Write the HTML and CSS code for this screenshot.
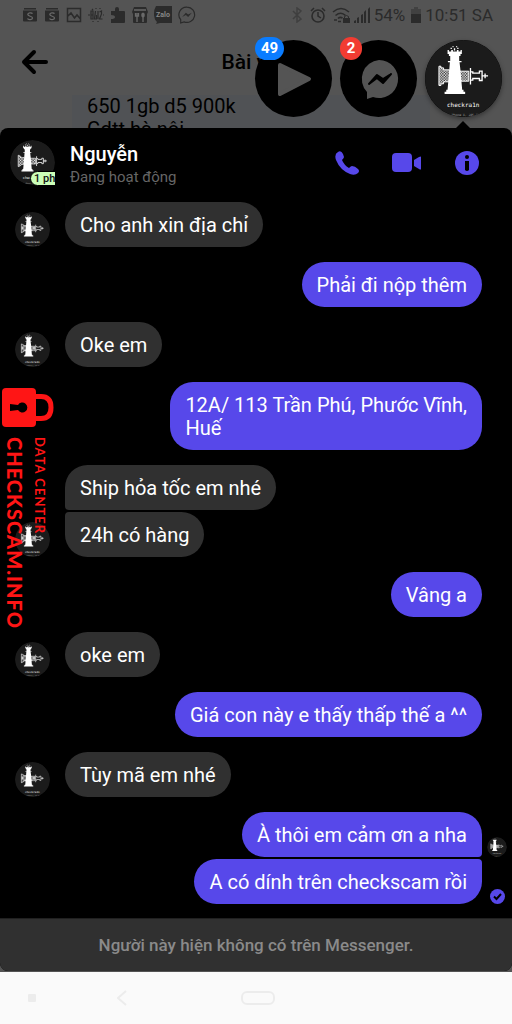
FILE: index.html
```html
<!DOCTYPE html>
<html lang="vi">
<head>
<meta charset="utf-8">
<meta name="viewport" content="width=device-width, initial-scale=1">
<title>Messenger</title>
<link rel="stylesheet" href="styles.css">
</head>
<body>
<svg class="defs" aria-hidden="true">
  <defs>
    <pattern id="mesh" width="8" height="8" patternUnits="userSpaceOnUse">
      <rect width="8" height="8" fill="#fff"/><rect width="4" height="4" fill="#1b1b1b"/><rect x="4" y="4" width="4" height="4" fill="#1b1b1b"/>
    </pattern>
    <clipPath id="disc"><circle cx="160" cy="144" r="116"/></clipPath>
    <symbol id="rook" viewBox="44 28 232 232">
      <g clip-path="url(#disc)">
        <circle cx="160" cy="144" r="116" fill="#1b1b1b"/>
        <path fill="url(#mesh)" stroke="#fff" stroke-width="3" d="M86 107h6v5h8v6h18v36h-18v6h-8v5h-6z"/>
        <path fill="url(#mesh)" stroke="#fff" stroke-width="3" d="M148 122h28v30h-28z"/>
        <path fill="none" stroke="#fff" stroke-width="4" d="M181 112v12h7v4h20v-6h8v28h-8v-6h-20v5h-7v13M181 124v25M216 136h18M225 129v14"/>
        <path fill="#fff" d="M112 58h4v5h7v-5h5v5h12v-5h5v5h6v-5h4v12h-4v6h-4v15h7v4h-6l3 25 5 58h4v6h5v7h-62v-7h5v-6h4l5-58 2-25h-6v-4h7V76h-4v-6h-4z"/>
        <path fill="#fff" d="M121 51h4v4h-4zM131 53h4v7h-4zM141 51h4v4h-4zM127 46h3v4h-3zM138 46h3v4h-3z"/>
        <text x="159" y="231" text-anchor="middle" class="rook-name">checkra1n</text>
        <text x="164" y="256" text-anchor="middle" class="rook-note">iPhone X, iOS 13</text>
      </g>
    </symbol>
    <symbol id="bolt-bubble" viewBox="0 0 24 24">
      <path fill="none" stroke="currentColor" stroke-width="1.6" d="M12 1.5a10.2 10.2 0 1 1-4 19.6L3.600 22.600v-4.400A10.2 10.2 0 0 1 12 1.500z"/>
      <path fill="currentColor" d="M5.500 14.500l5-5.500 3 2.400 5-2.400-5 5.600-3-2.500z"/>
    </symbol>
    <symbol id="card-s" viewBox="0 0 16 16">
      <path fill="currentColor" d="M2 1h12v1.500H2zM1 3.500h14v10q0 1-1 1H2q-1 0-1-1z"/>
      <path fill="none" stroke="#6a6a6a" stroke-width="1.300" d="M10.500 6.700C9.800 5.500 5.800 5.500 5.800 7.500S10.500 9 10.500 11s-4.300 2.100-5 .6"/>
    </symbol>
  </defs>
</svg>

<div class="screen">
  <section class="backdrop">
    <div class="statusbar">
      <div class="notices">
        <svg viewBox="0 0 16 16"><use href="#card-s"/></svg>
        <svg viewBox="0 0 16 16"><use href="#card-s"/></svg>
        <svg viewBox="0 0 16 16"><path fill="none" stroke="currentColor" stroke-width="1.500" d="M1.500 1.500h13v13h-13zM2 9l3-3 3.500 5L11 8l3.500 4"/></svg>
        <svg viewBox="0 0 16 16"><path fill="none" stroke="currentColor" stroke-width="1.200" d="M0 8h2M3 4v8h2V8H3V4h2v4M7.500 4L6.500 12h2V8M10 4v8M11.500 5l2-1v3l-2 5h3M15 8h1M4 2l1 1M8 1v1M12 1v1M5 14v1M10 14v1"/></svg>
        <svg viewBox="0 0 16 16"><path fill="currentColor" d="M1 4h4V2q0-2 2-2t2 2v2h5q1 0 1 1v10q0 1-1 1H1v-4q4 0 4-2T1 8z"/></svg>
        <svg viewBox="0 0 16 16"><path fill="currentColor" d="M2 0h12l2 5-1 2v8q0 1-1 1H2q-1 0-1-1V7L0 5z"/><path stroke="#6a6a6a" stroke-width="1.300" fill="none" d="M2 3h12M5 6v9M3.500 6v3h3V6M11 10v5"/><ellipse cx="11" cy="8" rx="1.800" ry="2.500" fill="#6a6a6a"/></svg>
        <svg class="zalo" viewBox="0 0 18 18"><path fill="currentColor" d="M2 0h16v17H6l-4 1 1-2Q0 13 0 8q0-5 2-8z"/><text x="9" y="11" text-anchor="middle">Zalo</text></svg>
        <svg class="msgr"><use href="#bolt-bubble"/></svg>
      </div>
      <div class="system">
        <svg class="bt" viewBox="0 0 10 16"><path fill="none" stroke="currentColor" stroke-width="1.500" d="M1 4l8 8-4 3V1l4 3-8 8"/></svg>
        <svg viewBox="0 0 16 16"><circle cx="8" cy="9" r="6" fill="none" stroke="currentColor" stroke-width="1.600"/><path fill="none" stroke="currentColor" stroke-width="1.500" d="M1 4l3-3M15 4l-3-3M8 5v4l3 2"/></svg>
        <svg class="wifi" viewBox="0 0 18 16"><path fill="none" stroke="currentColor" stroke-width="1.600" d="M1 5q8-7 16 0M3.500 8.500q5.500-4.500 10 0M6 11.500q2-2 4.500-.5M2 13h3M6 14.500h3"/><path fill="currentColor" d="M11 11h7v5h-7z"/><path fill="none" stroke="currentColor" d="M12.500 11V9.500q2-2 4 0V11"/></svg>
        <svg viewBox="0 0 16 16"><path fill="currentColor" d="M0 14l2-1v3H0zM3 11l2-1v6H3zM7 8l2-1v9H7zM10 5l2-2v13h-2zM14 2l2-2v16h-2z"/></svg>
        <span>54%</span>
        <svg class="battery" viewBox="0 0 10 16"><path opacity=".45" fill="currentColor" d="M3 0h4v2h3v6H0V2h3z"/><path fill="currentColor" d="M0 7h10v9H0z"/></svg>
        <span>10:51 SA</span>
      </div>
    </div>
    <header class="post-header">
      <button class="back" aria-label="Quay lại"><svg viewBox="0 0 28 26"><path fill="none" stroke="#000" stroke-width="4" stroke-linecap="round" stroke-linejoin="round" d="M13 3L3 13l10 10M3 13h22"/></svg></button>
      <h1>Bài viết</h1>
    </header>
    <div class="post">650 1gb d5 900k<br>Gdtt hà nội</div>
    <nav class="heads">
      <button class="head" aria-label="Video, 49 thông báo"><svg viewBox="0 0 77 77"><path fill="#545454" stroke="#545454" stroke-width="4" stroke-linejoin="round" d="M25 25l29 14-29 15z"/></svg><span class="count blue">49</span></button>
      <button class="head" aria-label="Tin nhắn, 2 thông báo"><svg viewBox="0 0 77 77"><path fill="#545454" d="M39 20a19 19 0 1 1-6 37l-6 2v-7A19 19 0 0 1 39 20z"/><path fill="#000" stroke="#000" stroke-width="2" stroke-linejoin="round" d="M29 44l8-9 6 4 8-5-8 9-6-5z"/></svg><span class="count red">2</span></button>
      <button class="head current" aria-label="Nguyễn"><svg><use href="#rook"/></svg></button>
    </nav>
  </section>

  <main class="chat">
    <header class="chat-header">
      <div class="portrait"><svg><use href="#rook"/></svg><span class="ago">1 phút</span></div>
      <div class="who"><h2>Nguyễn</h2><p>Đang hoạt động</p></div>
      <div class="actions">
        <button aria-label="Gọi thoại"><svg viewBox="0 0 24 24"><path fill="currentColor" d="M3 1q3-2 5 2l1 3q0 1-2 3 2 5 7 8 2-2 3-2 3 0 6 3 2 2 0 4-3 3-8 1Q5 19 1 9-1 3 3 1z"/></svg></button>
        <button aria-label="Gọi video"><svg class="video" viewBox="0 0 30 20"><rect width="20" height="19" rx="4" fill="currentColor"/><path fill="currentColor" d="M22 7l5-3q2-1 2 0v12q0 1-2 0l-5-3z"/></svg></button>
        <button aria-label="Thông tin"><svg viewBox="0 0 24 24"><circle cx="12" cy="12" r="12" fill="currentColor"/><circle cx="12" cy="6" r="2" fill="#000"/><path fill="#000" d="M10 10h4v9q-2 2-4 0z"/></svg></button>
      </div>
    </header>

    <div class="messages">
      <div class="row"><svg class="avatar"><use href="#rook"/></svg><p class="bubble">Cho anh xin địa chỉ</p></div>
      <div class="row mine"><p class="bubble">Phải đi nộp thêm</p><span class="receipt"></span></div>
      <div class="row"><svg class="avatar"><use href="#rook"/></svg><p class="bubble">Oke em</p></div>
      <div class="row mine"><p class="bubble">12A/ 113 Trần Phú, Phước Vĩnh,<br>Huế</p><span class="receipt"></span></div>
      <div class="group">
        <div class="row"><span class="avatar"></span><p class="bubble first">Ship hỏa tốc em nhé</p></div>
        <div class="row"><svg class="avatar"><use href="#rook"/></svg><p class="bubble last">24h có hàng</p></div>
      </div>
      <div class="row mine"><p class="bubble">Vâng a</p><span class="receipt"></span></div>
      <div class="row"><svg class="avatar"><use href="#rook"/></svg><p class="bubble">oke em</p></div>
      <div class="row mine"><p class="bubble">Giá con này e thấy thấp thế a ^^</p><span class="receipt"></span></div>
      <div class="row"><svg class="avatar"><use href="#rook"/></svg><p class="bubble">Tùy mã em nhé</p></div>
      <div class="group">
        <div class="row mine"><p class="bubble first">À thôi em cảm ơn a nha</p><span class="receipt"><svg class="seen"><use href="#rook"/></svg></span></div>
        <div class="row mine"><p class="bubble last">A có dính trên checkscam rồi</p><span class="receipt"><svg class="sent" viewBox="0 0 15 15"><circle cx="7.500" cy="7.500" r="7.500" fill="#5748ea"/><path fill="none" stroke="#000" stroke-width="2" d="M4 7.500l2.500 2.500L11 5"/></svg></span></div>
      </div>
    </div>

    <footer class="unavailable">Người này hiện không có trên Messenger.</footer>

    <aside class="watermark">
      <svg viewBox="0 0 53 40"><path fill="none" stroke="#ff1515" stroke-width="5" d="M32 8.500h7q10 0 10 11t-10 11h-7"/><rect width="34" height="39" rx="4" fill="#ff1515"/><path fill="#000" d="M8 16l8 1a5 5 0 1 1 0 5l-8 1z"/></svg>
      <div class="lines"><strong>CHECKSCAM.INFO</strong><span>DATA CENTER</span></div>
    </aside>
  </main>

  <nav class="softkeys">
    <button aria-label="Ẩn thanh"><svg viewBox="0 0 8 8"><rect width="8" height="8" rx="1" fill="#ececec"/></svg></button>
    <button aria-label="Quay lại"><svg class="prev" viewBox="0 0 10 16"><path fill="none" stroke="#ececec" stroke-width="2" d="M9 1L1 8l8 7"/></svg></button>
    <button aria-label="Màn hình chính"><svg class="home" viewBox="0 0 34 14"><rect x="1" y="1" width="32" height="12" rx="5" fill="none" stroke="#ececec" stroke-width="2"/></svg></button>
  </nav>
</div>
</body>
</html>
```
FILE: styles.css
```css
* { box-sizing: border-box; }
body { margin: 0; background: #545454; font-family: Roboto, "Noto Sans", sans-serif; }
h1, h2, p { margin: 0; }
button { padding: 0; border: 0; background: none; color: inherit; font: inherit; display: flex; align-items: center; justify-content: center; }
svg { display: block; flex: none; }
.defs { position: absolute; width: 0; height: 0; }
.rook-name { font: 18px "DejaVu Sans Mono", monospace; fill: #fff; }
.rook-note { font: 9px "DejaVu Sans Mono", monospace; fill: #aaa; }

.screen { min-height: 100vh; display: flex; flex-direction: column; }

.backdrop { position: relative; height: 128px; }
.statusbar { height: 30px; padding: 0 19px 0 22px; display: flex; align-items: center; justify-content: space-between; color: #2b2b2b; font-size: 17px; line-height: 20px; }
.notices { display: flex; align-items: center; gap: 6px; }
.notices svg, .system svg { width: 16px; height: 16px; }
.notices .zalo, .notices .msgr { width: 18px; height: 18px; }
.zalo text { font: bold 7px Roboto, sans-serif; fill: #888; }
.system { display: flex; align-items: center; gap: 4px; }
.system .bt { width: 10px; opacity: .5; margin-right: 4px; }
.system .wifi { width: 18px; margin-left: 2px; }
.system .battery { width: 10px; margin-left: 2px; }
.post-header { height: 65px; display: grid; grid-template-columns: 1fr auto 1fr; align-items: center; padding: 0 21px 2px 21px; }
.back { width: 28px; height: 28px; }
.back svg { width: 28px; height: 26px; }
.post-header h1 { font-size: 21px; font-weight: 500; line-height: 24px; }
.post { height: 33px; margin: 0 82px 0 72px; padding-left: 15px; overflow: hidden; background: #505255; color: #000; font-size: 20px; line-height: 23px; }
.heads { position: absolute; top: 40px; right: 10px; display: flex; gap: 8px; }
.head { position: relative; width: 77px; height: 77px; border-radius: 50%; background: #000; }
.head svg { width: 77px; height: 77px; }
.head.current { box-shadow: 0 2px 5px #0006; }
.head.current::after { content: ""; position: absolute; top: 81px; left: 30px; border: 8px solid transparent; border-top: 0; border-bottom-color: #000; }
.count { position: absolute; top: -3px; left: 0; min-width: 22px; height: 23px; padding: 0 6px; border-radius: 12px; color: #fff; font-size: 15px; font-weight: 700; line-height: 23px; }
.blue { background: #0a7cff; }
.red { background: #f23c32; }

.chat { position: relative; flex: 1; display: flex; flex-direction: column; margin-bottom: 1px; border-radius: 8px; overflow: hidden; background: #000; color: #fff; }
.chat-header { height: 74px; padding: 12px 32px 16px 10px; display: flex; align-items: flex-start; gap: 15px; }
.portrait { position: relative; width: 45px; height: 46px; overflow: hidden; }
.portrait svg { width: 45px; height: 45px; }
.ago { position: absolute; left: 20px; bottom: 0; padding: 0 3px; border: 1px solid #000; border-radius: 8px; background: #ccffb8; color: #111; font-size: 11px; font-weight: 500; line-height: 13px; white-space: nowrap; }
.who { flex: 1; padding-top: 2px; }
.who h2 { font-size: 20px; font-weight: 500; line-height: 24px; }
.who p { color: #666; font-size: 15px; line-height: 22px; }
.actions { display: flex; gap: 32px; color: #5748ea; }
.actions button { width: 30px; height: 46px; }
.actions button:first-child { width: 26px; }
.actions button:last-child { width: 26px; }
.actions svg { width: 24px; height: 24px; }
.actions .video { width: 30px; height: 20px; }

.messages { flex: 1; display: flex; flex-direction: column; gap: 15px; padding-bottom: 14px; }
.group { display: flex; flex-direction: column; gap: 2px; }
.row { display: flex; align-items: flex-end; gap: 15px; padding-left: 15px; }
.avatar { width: 35px; height: 35px; flex: none; }
.bubble { padding: 12px 15px 10px; border-radius: 23px; background: #303030; font-size: 20px; line-height: 23px; }
.first { border-bottom-left-radius: 4px; }
.last { border-top-left-radius: 4px; }
.mine { justify-content: flex-end; gap: 5px; padding-right: 5px; }
.mine .bubble { background: #5748ea; }
.mine .first { border-bottom-left-radius: 23px; border-bottom-right-radius: 4px; }
.mine .last { border-top-left-radius: 23px; border-top-right-radius: 4px; }
.receipt { width: 20px; flex: none; display: flex; justify-content: center; }
.seen { width: 20px; height: 20px; }
.sent { width: 15px; height: 15px; }

.unavailable { padding: 15px; border-top: 1px solid #202020; background: #303030; color: #8a8a8a; font-size: 17px; font-weight: 500; line-height: 22px; text-align: center; }

.watermark { position: absolute; top: 260px; left: 2px; color: #ff1515; font-family: Lato, sans-serif; }
.watermark svg { width: 53px; height: 40px; }
.lines { display: flex; gap: 5px; margin-top: 9px; padding-left: 1px; writing-mode: vertical-rl; flex-direction: column-reverse; justify-content: flex-end; align-items: flex-start; }
.lines strong { font-size: 20px; font-weight: 900; line-height: 24px; letter-spacing: 1px; }
.lines span { font-size: 13px; font-weight: 700; line-height: 16px; letter-spacing: 1px; }

.softkeys { height: 52px; display: flex; align-items: center; padding-left: 17px; background: #fafafa; }
.softkeys button { height: 48px; width: 30px; }
.softkeys button:nth-child(2) { margin-left: 60px; }
.softkeys button:nth-child(3) { margin-left: 104px; width: 34px; }
.softkeys svg { width: 8px; height: 8px; }
.softkeys .prev { width: 10px; height: 16px; }
.softkeys .home { width: 34px; height: 14px; }
```
